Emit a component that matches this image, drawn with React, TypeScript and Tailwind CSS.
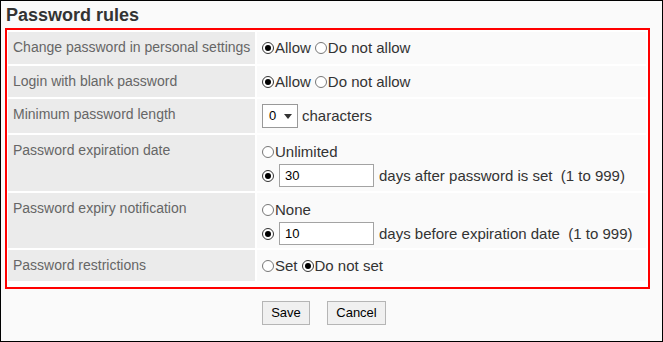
import React from "react";

const Radio = ({ checked = false }: { checked?: boolean }) => (
  <span
    className={`inline-flex h-[12px] w-[12px] shrink-0 items-center justify-center rounded-full border bg-white ${
      checked ? "border-[#333]" : "border-[#777]"
    }`}
  >
    {checked && <span className="h-[6px] w-[6px] rounded-full bg-black" />}
  </span>
);

const Option = ({ label, checked = false }: { label: string; checked?: boolean }) => (
  <label className="mr-[4px] inline-flex items-center">
    <Radio checked={checked} />
    <span className="ml-[1px]">{label}</span>
  </label>
);

const NumberBox = ({ value }: { value: string }) => (
  <input
    readOnly
    value={value}
    className="h-[23px] w-[95px] border border-[#a3a3a3] bg-white pl-[5px] text-[13px] text-black outline-none"
  />
);

const Label = ({ text, h }: { text: string; h: string }) => (
  <div className={`${h} bg-[#ebebeb] pl-[5px] pt-[7px] text-[14px] leading-[16px] text-[#666]`}>
    {text}
  </div>
);

export default function App() {
  return (
    <div className="h-[342px] w-[663px] border border-black bg-[#fafafa] font-['Liberation_Sans',Arial,sans-serif] text-[#333]">
      <h2 className="pl-[5px] pt-[4px] text-[18px] font-bold leading-[21px] text-[#333]">
        Password rules
      </h2>

      {/* rules table */}
      <div className="ml-[4px] mt-[2px] w-[645px] border-2 border-[#f00] bg-white pb-[6px] pl-[1px] pr-[2px] pt-[2px]">
        <div className="grid grid-cols-[247px_1fr] gap-[2px] text-[15px] leading-[18px]">
          <Label text="Change password in personal settings" h="h-[32px]" />
          <div className="flex items-center bg-[#fafafa] pl-[5px]">
            <Option label="Allow" checked />
            <Option label="Do not allow" />
          </div>

          <Label text="Login with blank password" h="h-[31px]" />
          <div className="flex items-center bg-[#fafafa] pl-[5px]">
            <Option label="Allow" checked />
            <Option label="Do not allow" />
          </div>

          <Label text="Minimum password length" h="h-[34px]" />
          <div className="flex items-center bg-[#fafafa] pl-[5px]">
            <div className="flex h-[24px] w-[36px] items-center border border-[#999] bg-white pl-[6px] text-[13px] text-black">
              0
              <svg width="8" height="5" viewBox="0 0 8 5" className="ml-[8px]">
                <polygon points="0,0 8,0 4,5" fill="#333" />
              </svg>
            </div>
            <span className="ml-[4px]">characters</span>
          </div>

          <Label text="Password expiration date" h="h-[56px]" />
          <div className="flex flex-col gap-[3px] bg-[#fafafa] pl-[5px] pt-[8px]">
            <Option label="Unlimited" />
            <div className="flex items-center">
              <Radio checked />
              <span className="ml-[5px]">
                <NumberBox value="30" />
              </span>
              <span className="ml-[5px] whitespace-pre">days after password is set  (1 to 999)</span>
            </div>
          </div>

          <Label text="Password expiry notification" h="h-[55px]" />
          <div className="flex flex-col gap-[3px] bg-[#fafafa] pl-[5px] pt-[8px]">
            <Option label="None" />
            <div className="flex items-center">
              <Radio checked />
              <span className="ml-[5px]">
                <NumberBox value="10" />
              </span>
              <span className="ml-[5px] whitespace-pre">days before expiration date  (1 to 999)</span>
            </div>
          </div>

          <Label text="Password restrictions" h="h-[31px]" />
          <div className="flex items-center bg-[#fafafa] pl-[5px]">
            <Option label="Set" />
            <Option label="Do not set" checked />
          </div>
        </div>
      </div>

      <div className="mt-[12px] flex justify-center gap-[17px] pr-[15px]">
        <button className="h-[24px] w-[48px] border border-[#b5b5b5] bg-[#f0f0f0] text-[13px] text-black">
          Save
        </button>
        <button className="h-[24px] w-[59px] border border-[#b5b5b5] bg-[#f0f0f0] text-[13px] text-black">
          Cancel
        </button>
      </div>
    </div>
  );
}
